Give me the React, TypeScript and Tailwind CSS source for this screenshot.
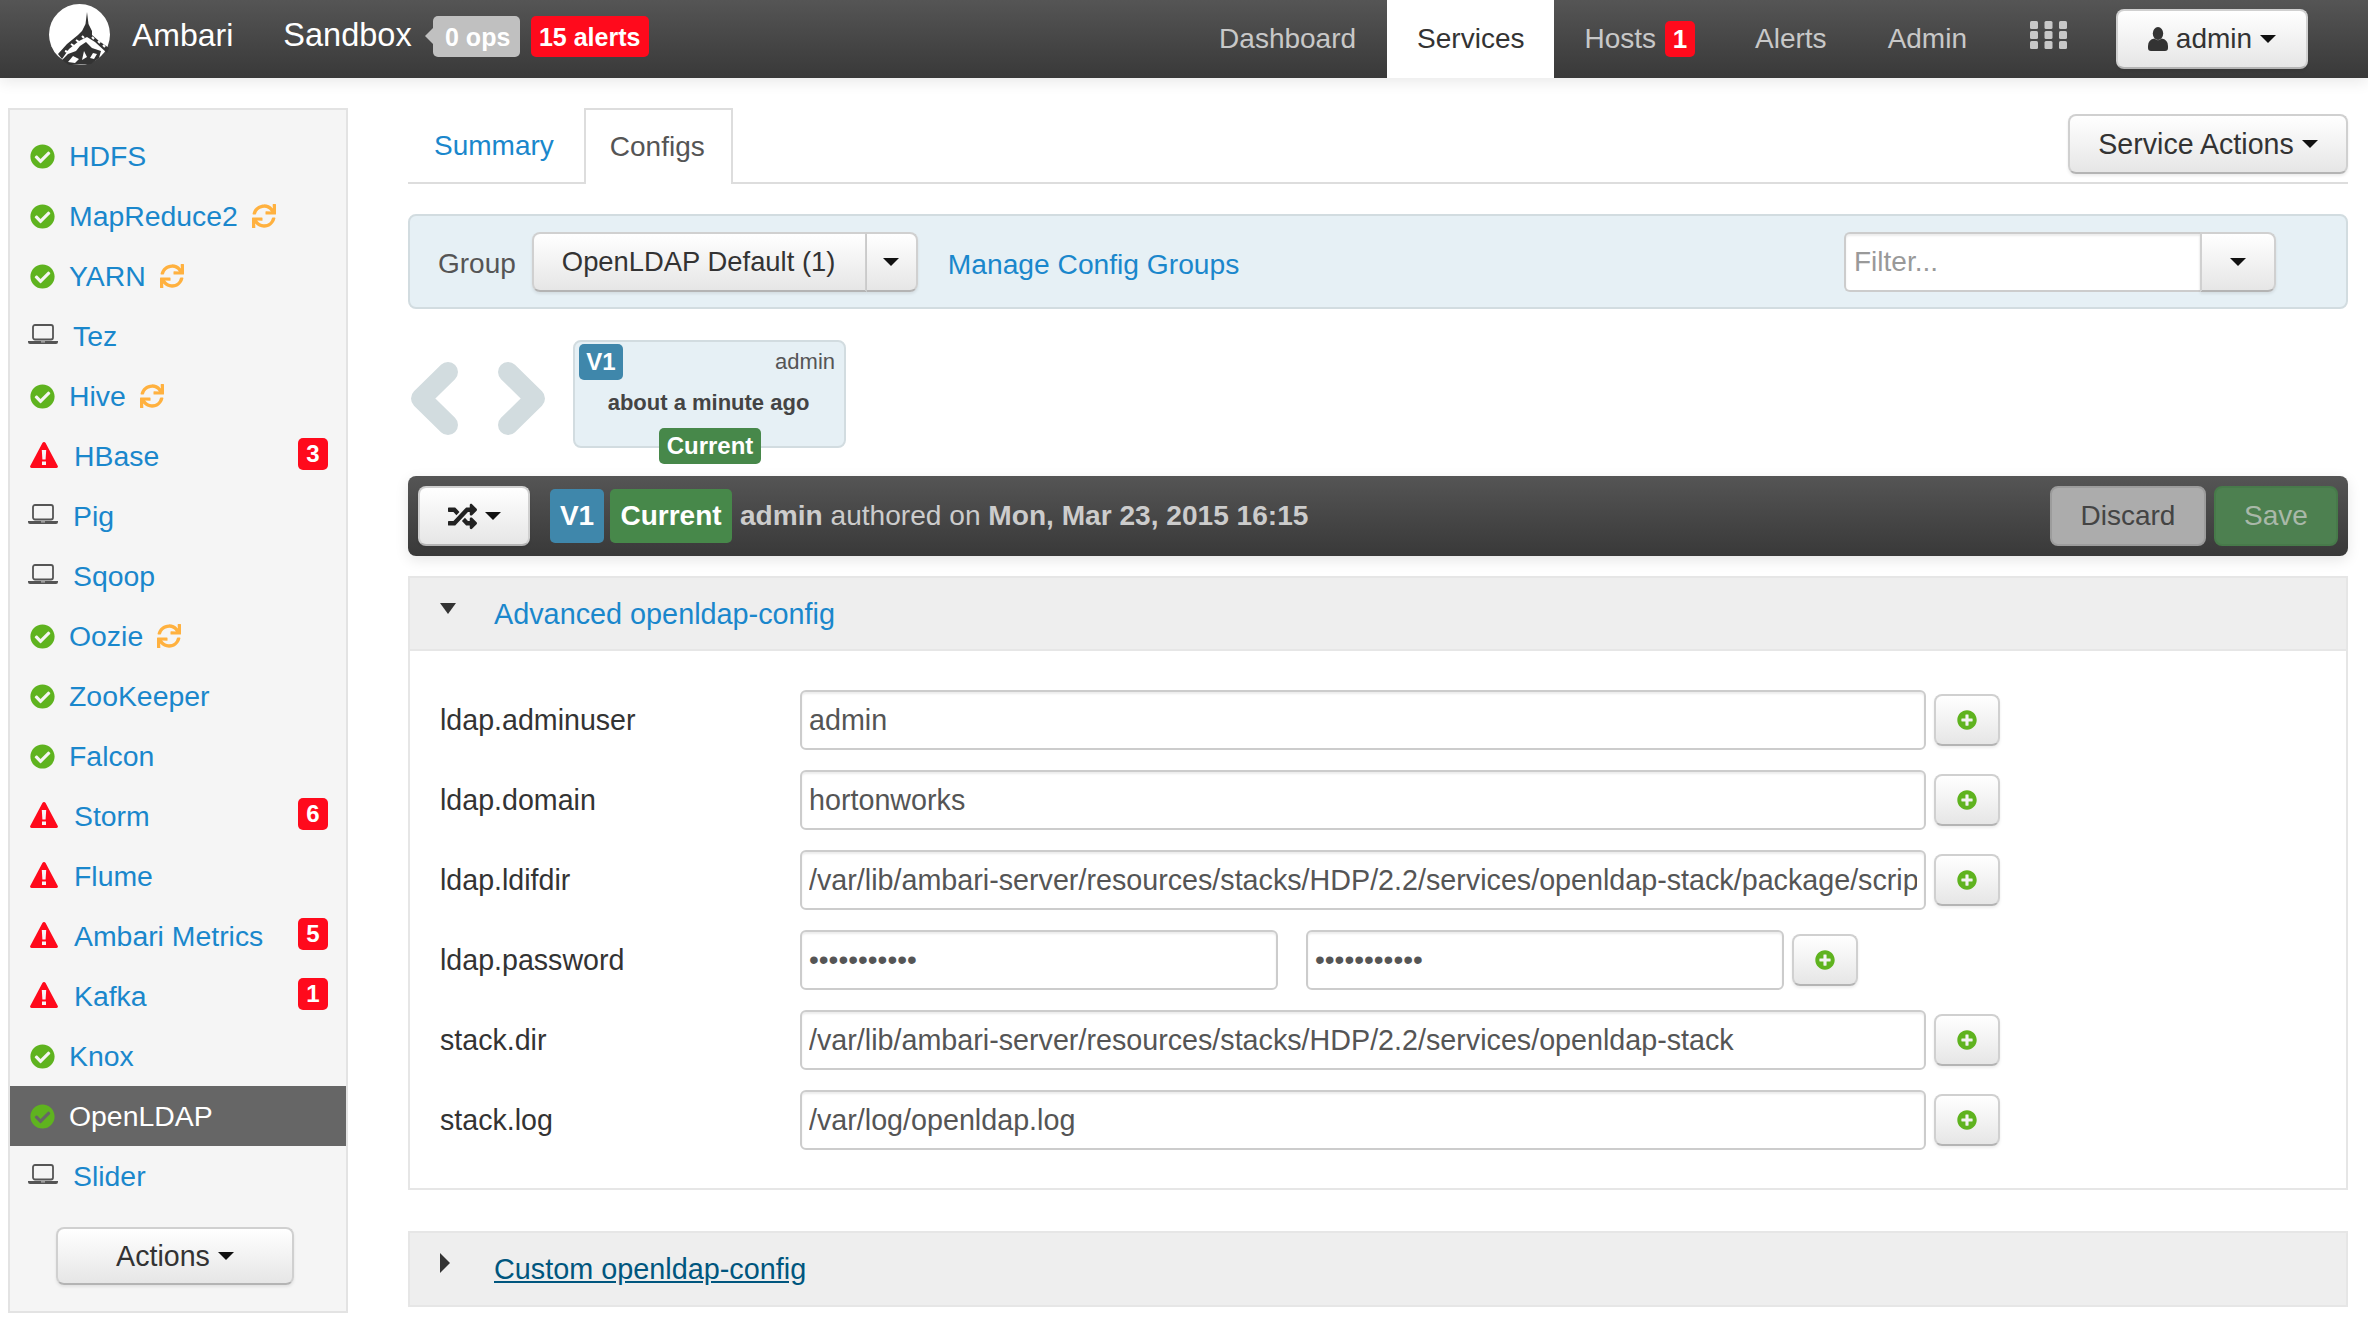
import { FaCheckCircle, FaPlusCircle, FaRandom, FaSync } from "react-icons/fa";

type Status = "ok" | "warn" | "off";

const services: { name: string; status: Status; sync?: boolean; count?: number; active?: boolean }[] = [
  { name: "HDFS", status: "ok" },
  { name: "MapReduce2", status: "ok", sync: true },
  { name: "YARN", status: "ok", sync: true },
  { name: "Tez", status: "off" },
  { name: "Hive", status: "ok", sync: true },
  { name: "HBase", status: "warn", count: 3 },
  { name: "Pig", status: "off" },
  { name: "Sqoop", status: "off" },
  { name: "Oozie", status: "ok", sync: true },
  { name: "ZooKeeper", status: "ok" },
  { name: "Falcon", status: "ok" },
  { name: "Storm", status: "warn", count: 6 },
  { name: "Flume", status: "warn" },
  { name: "Ambari Metrics", status: "warn", count: 5 },
  { name: "Kafka", status: "warn", count: 1 },
  { name: "Knox", status: "ok" },
  { name: "OpenLDAP", status: "ok", active: true },
  { name: "Slider", status: "off" },
];

const configRows = [
  { label: "ldap.adminuser", value: "admin" },
  { label: "ldap.domain", value: "hortonworks" },
  { label: "ldap.ldifdir", value: "/var/lib/ambari-server/resources/stacks/HDP/2.2/services/openldap-stack/package/scripts" },
  { label: "ldap.password", value: "hortonworks", password: true },
  { label: "stack.dir", value: "/var/lib/ambari-server/resources/stacks/HDP/2.2/services/openldap-stack" },
  { label: "stack.log", value: "/var/log/openldap.log" },
];

const btn =
  "rounded-[8px] border-2 border-[#d0d0d0] border-b-[#b4b4b4] bg-linear-to-b from-white to-[#e6e6e6] shadow-[0_2px_3px_rgba(0,0,0,0.08)]";

function Caret({ className = "" }: { className?: string }) {
  return <span className={`inline-block h-0 w-0 border-x-[8px] border-t-[8px] border-x-transparent border-t-[#111] ${className}`} />;
}

function Logo() {
  return (
    <svg viewBox="0 0 61 61" className="h-[61px] w-[61px] shrink-0">
      <ellipse cx="30.5" cy="30.5" rx="30.5" ry="30.5" fill="#fff" />
      <path d="M38 8 L39.5 20 L43 27 L43 31 L50 37 L60 44 L58 49 L46 38 L38 33 L30 37 L20 45 L13 55 L9 50 L18 40 L29 31 L33 27 L36.5 20 Z" fill="#333" />
      <path d="M37 38 L43 44 L52 47 L50 54 L42 60 L20 61 L13 56 L19 50 L27 47 L31 42 Z" fill="#333" />
      <path d="M24 52 L30 55 L26 59 L19 58 Z M35 47 L38 53 L33 56 Z M44 49 L48 50 L45 55 L41 54 Z" fill="#fff" />
      <path d="M22 40 L25 42 M27 36 L30 38 M33 32 L35 34 M43 33 L45 35 M49 37 L51 39 M54 41 L56 43 M16 47 L19 48" stroke="#fff" strokeWidth="2" />
    </svg>
  );
}

function GridIcon() {
  return (
    <svg viewBox="0 0 37 28" className="h-[28px] w-[37px]" fill="#c8c8c8">
      {[0, 14.5, 29].map((x) =>
        [0, 10, 20].map((y) => <rect key={`${x}-${y}`} x={x} y={y} width="8" height="8" rx="1.5" />),
      )}
    </svg>
  );
}

function Chevron({ right = false }: { right?: boolean }) {
  return (
    <svg viewBox="0 0 47 73" className="h-[73px] w-[47px]">
      <path
        d={right ? "M10 10 L37 36.5 L10 63" : "M37 10 L10 36.5 L37 63"}
        fill="none"
        stroke="#d2dcdf"
        strokeWidth="20"
        strokeLinecap="round"
        strokeLinejoin="round"
      />
    </svg>
  );
}

function Laptop() {
  return (
    <svg viewBox="0 0 30 20" className="-ml-[2px] mr-[15px] -mt-[4px] h-[20px] w-[30px]">
      <rect x="5" y="1" width="20" height="14.5" rx="2" fill="none" stroke="#555" strokeWidth="1.8" />
      <path d="M0 17 H30 V18 Q30 20 28 20 H2 Q0 20 0 18 Z" fill="#555" />
      <rect x="13" y="17.4" width="4" height="1" fill="#ccc" />
    </svg>
  );
}

function Warning() {
  return (
    <svg viewBox="0 0 28 26" className="mr-[16px] -mt-[2px] h-[26px] w-[28px]">
      <path
        fillRule="evenodd"
        d="M14 0 Q15 0 15.6 1 L27.8 24 Q28.4 26 26.5 26 H1.5 Q-0.4 26 0.2 24 L12.4 1 Q13 0 14 0 Z M11.8 8 L12.4 17.5 H15.6 L16.2 8 Z M12 19.5 V23 H16 V19.5 Z"
        fill="#ff0a1c"
      />
    </svg>
  );
}

function UserIcon() {
  return (
    <svg viewBox="0 0 20 24" className="h-[24px] w-[20px]" fill="#333">
      <ellipse cx="10" cy="6.5" rx="5.2" ry="6.5" />
      <path d="M6.5 11.5 Q10 15 13.5 11.5 Q20 12.5 20 19 V21 Q20 24 17 24 H3 Q0 24 0 21 V19 Q0 12.5 6.5 11.5 Z" />
    </svg>
  );
}

function ServiceRow({ service }: { service: (typeof services)[number] }) {
  return (
    <div className={`flex h-[60px] items-center pl-[20px] pr-[18px] text-[28.4px] ${service.active ? "bg-[#666]" : ""}`}>
      {service.status === "ok" && <FaCheckCircle className="mr-[14px] text-[25px] text-[#5fb31f]" />}
      {service.status === "warn" && <Warning />}
      {service.status === "off" && <Laptop />}
      <span className={`-mt-[1px] ${service.active ? "text-white" : "text-[#1a87cc]"}`}>{service.name}</span>
      {service.sync && <FaSync className="ml-[14px] text-[24px] text-[#ffb13f]" />}
      {service.count !== undefined && (
        <span className="ml-auto -mt-[4px] flex h-[32px] w-[30px] items-center justify-center rounded-[5px] bg-[#ff0a1c] text-[24px] font-bold text-white">
          {service.count}
        </span>
      )}
    </div>
  );
}

function AddButton() {
  return (
    <button className={`${btn} ml-[8px] flex h-[52px] w-[66px] items-center justify-center`}>
      <FaPlusCircle className="text-[20px] text-[#5fb31f]" />
    </button>
  );
}

const inputCls =
  "h-[60px] rounded-[6px] border-2 border-[#ccc] bg-white px-[7px] text-[#555] shadow-[inset_0_2px_2px_rgba(0,0,0,0.075)] outline-none";

export default function App() {
  return (
    <div className="h-[1332px] w-[2368px] overflow-hidden bg-white text-[28px] leading-[40px] text-[#333] [font-family:'Liberation_Sans',Arial,sans-serif]">
      <nav className="relative z-10 flex h-[78px] items-center bg-linear-to-b from-[#555] to-[#393939] shadow-[0_4px_14px_rgba(0,0,0,0.09)]">
        <div className="flex items-center self-start pl-[49px] pt-[4px] text-white">
          <Logo />
          <span className="ml-[22px] text-[32px]">Ambari</span>
          <span className="ml-[50px] text-[32.5px]">Sandbox</span>
          <span className="relative ml-[21px] mt-[4px] flex h-[41px] w-[87px] items-center justify-center rounded-[5px] bg-[#c0c0c0] pl-[3px] text-[25px] font-bold">
            <span className="absolute -left-[8px] top-[12px] h-0 w-0 border-y-[8px] border-r-[8px] border-y-transparent border-r-[#c0c0c0]" />
            0 ops
          </span>
          <span className="ml-[11px] mt-[4px] flex h-[41px] w-[118px] items-center justify-center rounded-[5px] bg-[#ff0a1c] text-[25px] font-bold">
            15 alerts
          </span>
        </div>
        <div className="ml-auto flex h-full items-center pr-[60px] text-[#c8c8c8]">
          <a className="px-[31px]">Dashboard</a>
          <a className="flex h-full items-center bg-white px-[30px] text-[#333]">Services</a>
          <a className="flex items-center px-[30px]">
            Hosts
            <span className="ml-[9px] flex h-[36px] w-[30px] items-center justify-center rounded-[5px] bg-[#ff0a1c] text-[26px] font-bold text-white">
              1
            </span>
          </a>
          <a className="px-[30px]">Alerts</a>
          <a className="px-[31px]">Admin</a>
          <a className="ml-[32px] mr-[49px] -mt-[8px]">
            <GridIcon />
          </a>
          <button className={`${btn} flex h-[60px] w-[192px] items-center justify-center gap-[8px] text-[#333]`}>
            <UserIcon />
            admin
            <Caret />
          </button>
        </div>
      </nav>

      <div className="flex pl-[8px] pt-[30px]">
        <aside className="h-[1205px] w-[340px] shrink-0 border-2 border-[#e3e3e3] bg-[#f5f5f5] pt-[16px]">
          {services.map((service) => (
            <ServiceRow key={service.name} service={service} />
          ))}
          <div className="mt-[21px] flex justify-center pr-[6px]">
            <button className={`${btn} flex h-[58px] w-[238px] items-center justify-center gap-[8px] text-[28.6px]`}>
              Actions
              <Caret />
            </button>
          </div>
        </aside>

        <main className="ml-[60px] w-[1940px]">
          <div className="flex h-[76px] items-start justify-between border-b-2 border-[#ddd]">
            <div className="flex">
              <a className="mr-[4px] flex h-[76px] items-center px-[26px] text-[#1a87cc]">Summary</a>
              <a className="flex h-[76px] items-center border-2 border-b-0 border-[#ddd] bg-white px-[24px] pr-[26px] text-[#555]">Configs</a>
            </div>
            <button className={`${btn} mt-[6px] flex h-[60px] w-[280px] items-center justify-center gap-[8px] text-[28.6px]`}>
              Service Actions
              <Caret />
            </button>
          </div>

          <div className="mt-[30px] flex h-[95px] items-center rounded-[8px] border-2 border-[#d2dce0] bg-[#e6f0f5] pl-[28px] pr-[70px]">
            <span className="mt-[5px] text-[#555]">Group</span>
            <button className={`${btn} ml-[16px] h-[60px] w-[335px] rounded-r-none pl-[28px] text-left text-[27.4px]`}>OpenLDAP Default (1)</button>
            <button className={`${btn} flex h-[60px] w-[51px] items-center justify-center rounded-l-none border-l-0`}>
              <Caret />
            </button>
            <a className="ml-[30px] mt-[5px] text-[28.2px] text-[#1a87cc]">Manage Config Groups</a>
            <input
              readOnly
              placeholder="Filter..."
              className="ml-auto h-[60px] w-[356px] rounded-l-[6px] border-2 border-r-0 border-[#ccc] bg-white px-[8px] placeholder:text-[#999] outline-none shadow-[inset_0_2px_2px_rgba(0,0,0,0.075)]"
            />
            <button className={`${btn} flex h-[60px] w-[76px] items-center justify-center rounded-l-none`}>
              <Caret />
            </button>
          </div>

          <div className="mt-[31px] flex items-start">
            <div className="mt-[22px] flex gap-[40px] pl-[3px]">
              <Chevron />
              <Chevron right />
            </div>
            <div className="relative ml-[28px] h-[108px] w-[273px] rounded-[8px] border-2 border-[#d2dce0] bg-[#e6f0f5] text-[22px] leading-[30px]">
              <div className="flex items-start justify-between pl-[4px] pr-[9px] pt-[2px]">
                <span className="flex h-[36px] w-[44px] items-center justify-center rounded-[5px] bg-[#3f87ab] text-[24px] font-bold text-white">V1</span>
                <span className="mt-[3px] text-[#555]">admin</span>
              </div>
              <div className="mt-[8px] pr-[2px] text-center font-bold text-[#444]">about a minute ago</div>
              <span className="absolute left-[84px] top-[86px] flex h-[36px] w-[102px] items-center justify-center rounded-[5px] bg-[#47884a] text-[24px] font-bold text-white">
                Current
              </span>
            </div>
          </div>

          <div className="mt-[28px] flex h-[80px] items-center rounded-[8px] bg-linear-to-b from-[#555] to-[#393939] pl-[10px] pr-[10px] text-[#ccc] shadow-[0_4px_14px_rgba(0,0,0,0.1)]">
            <button className={`${btn} flex h-[60px] w-[112px] items-center justify-center gap-[8px] text-[#222]`}>
              <FaRandom className="text-[29px]" />
              <Caret />
            </button>
            <span className="ml-[20px] flex h-[54px] w-[54px] items-center justify-center rounded-[5px] bg-[#3f87ab] font-bold text-white">V1</span>
            <span className="ml-[6px] flex h-[54px] w-[122px] items-center justify-center rounded-[5px] bg-[#47884a] font-bold text-white">Current</span>
            <span className="ml-[8px] text-[28.1px]">
              <b>admin</b> authored on <b>Mon, Mar 23, 2015 16:15</b>
            </span>
            <button className="ml-auto h-[60px] w-[156px] rounded-[8px] border-2 border-[#9c9c9c] bg-[#acacac] text-[#444]">Discard</button>
            <button className="ml-[8px] h-[60px] w-[124px] rounded-[8px] border-2 border-[#477a4a] bg-[#4d8050] text-[#a9b8a9]">Save</button>
          </div>

          <section className="mt-[20px] border-2 border-[#e6e6e6]">
            <div className="flex h-[73px] items-center border-b-2 border-[#e6e6e6] bg-[#eee] pl-[30px]">
              <span className="-mt-[11px] mr-[38px] h-0 w-0 border-x-[8.5px] border-t-[11px] border-x-transparent border-t-[#333]" />
              <a className="text-[28.8px] text-[#1a87cc]">Advanced openldap-config</a>
            </div>
            <div className="flex flex-col gap-[20px] pb-[38px] pl-[30px] pt-[39px]">
              {configRows.map((row) => (
                <div key={row.label} className="flex h-[60px] items-center">
                  <label className="w-[360px] shrink-0 text-[28.6px]">{row.label}</label>
                  {row.password ? (
                    <>
                      <input readOnly type="password" value={row.value} className={`${inputCls} w-[478px]`} />
                      <input readOnly type="password" value={row.value} className={`${inputCls} ml-[28px] w-[478px]`} />
                    </>
                  ) : (
                    <input readOnly value={row.value} className={`${inputCls} w-[1126px] text-[28.7px]`} />
                  )}
                  <AddButton />
                </div>
              ))}
            </div>
          </section>

          <section className="mt-[41px] flex h-[76px] items-center border-2 border-[#e6e6e6] bg-[#eee] pl-[30px]">
            <span className="-mt-[12px] mr-[44px] h-0 w-0 border-y-[10px] border-l-[10px] border-y-transparent border-l-[#333]" />
            <a className="text-[28.8px] text-[#00567e] underline">Custom openldap-config</a>
          </section>
        </main>
      </div>
    </div>
  );
}
